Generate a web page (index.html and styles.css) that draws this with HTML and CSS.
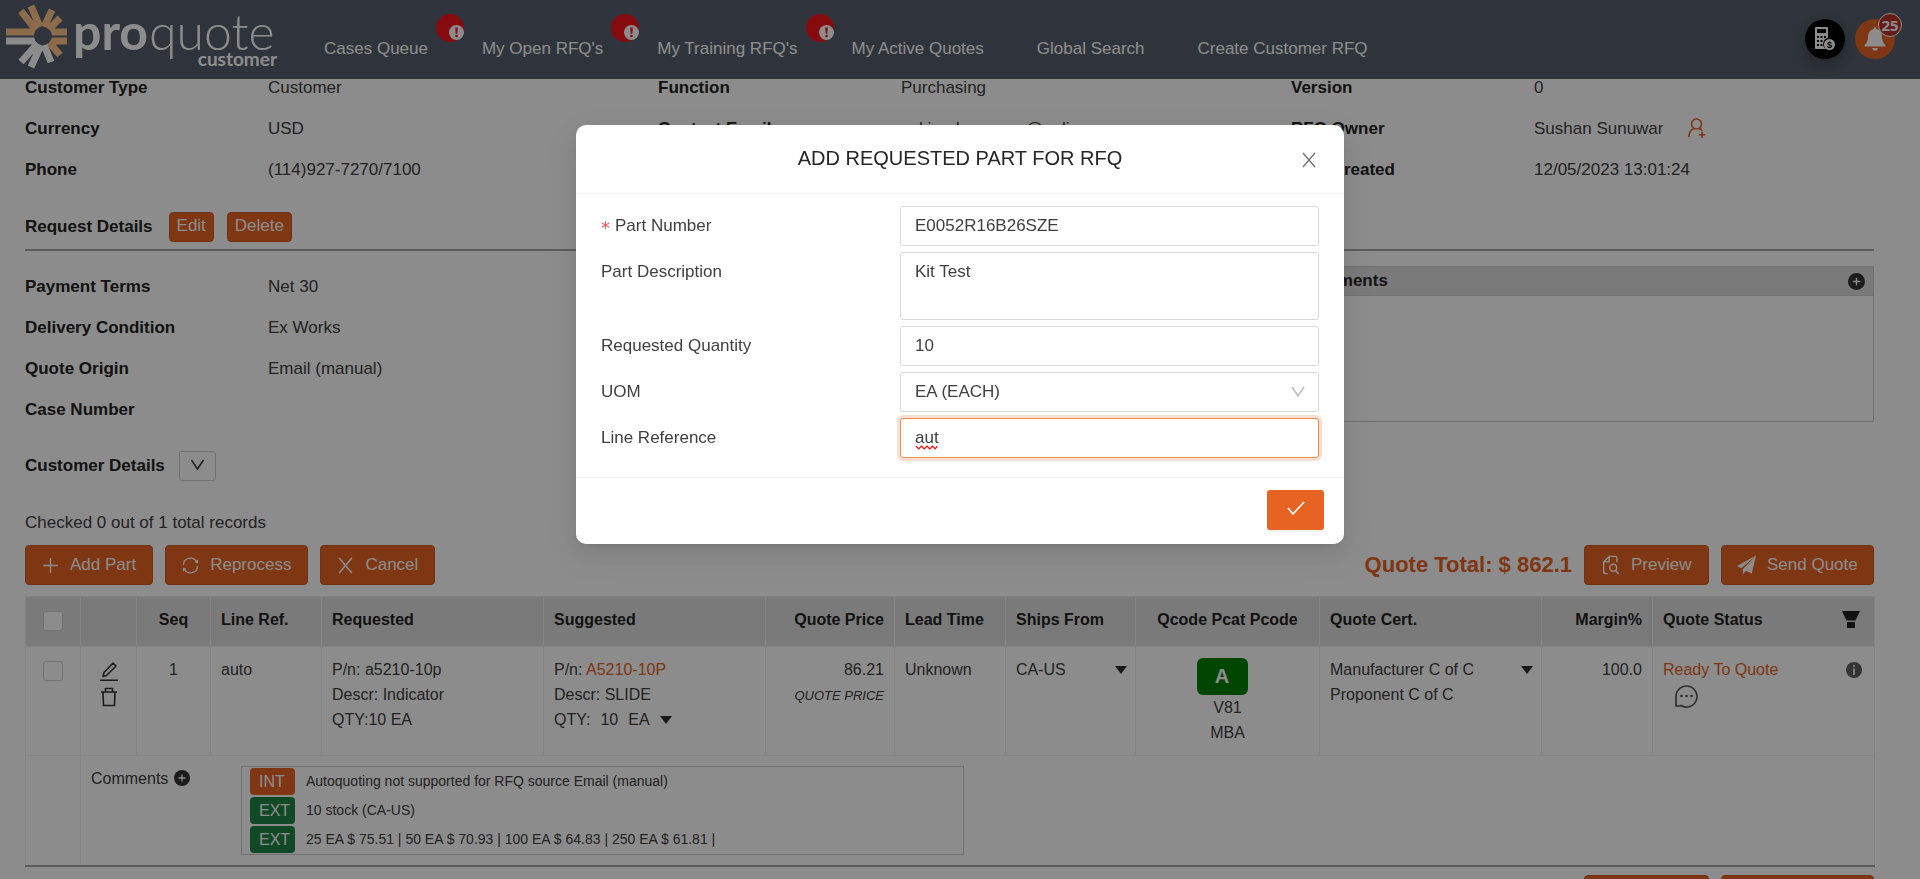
FILE: index.html
```html
<!DOCTYPE html>
<html lang="en">
<head>
<meta charset="utf-8">
<title>ProQuote Customer</title>
<link rel="stylesheet" href="styles.css">
</head>
<body>
<svg class="defs" aria-hidden="true">
  <symbol id="i-caret" viewBox="0 0 12 8"><path d="M0 0h12L6 8z" fill="currentColor"/></symbol>
  <symbol id="i-down" viewBox="0 0 14 12"><path d="M1 1l6 9 6-9" fill="none" stroke="currentColor" stroke-width="1.6"/></symbol>
  <symbol id="i-x" viewBox="0 0 16 16"><path d="M2 1l12 14M14 1L2 15" fill="none" stroke="currentColor" stroke-width="1.5"/></symbol>
  <symbol id="i-plus" viewBox="0 0 16 16"><path d="M8 1v14M1 8h14" fill="none" stroke="currentColor" stroke-width="1.3"/></symbol>
  <symbol id="i-pluscircle" viewBox="0 0 16 16"><circle cx="8" cy="8" r="8" fill="currentColor"/><path d="M8 4.500v7M4.500 8h7" stroke="#fff" stroke-width="1.300"/></symbol>
  <symbol id="i-sync" viewBox="0 0 18 18"><path d="M1.500 8.500a7.500 7.500 0 0 1 14-3.500M16.500 9.500a7.500 7.500 0 0 1-14 3.500" fill="none" stroke="currentColor" stroke-width="1.400"/><path d="M17 2.500v4.500l-4-1.500zM1 15.500V11l4 1.500z" fill="currentColor"/></symbol>
  <symbol id="i-alert" viewBox="0 0 15 15"><circle cx="7.5" cy="7.5" r="7.500" fill="#fff"/><path d="M6.200 2.500h2.600l-.5 6.200H6.700z" fill="#f5141d"/><circle cx="7.500" cy="11" r="1.300" fill="#f5141d"/></symbol>
  <symbol id="i-preview" viewBox="0 0 20 22"><path d="M7 20.500H4.500a2 2 0 0 1-2-2V7.500l6-6h7a1.500 1.500 0 0 1 1.500 1.500v5M8.500 2v5.500H3" fill="none" stroke="currentColor" stroke-width="1.600"/><circle cx="13" cy="14" r="3.800" fill="none" stroke="currentColor" stroke-width="1.600"/><path d="M15.500 17l3.500 4" stroke="currentColor" stroke-width="1.600"/></symbol>
  <symbol id="i-send" viewBox="0 0 18 18"><path d="M18 0L0 10l4 2zM18 0L5.500 13v5l3-3.500 5.500 2.500z" fill="currentColor"/></symbol>
</svg>

<header class="topbar">
  <svg class="logo" viewBox="0 0 280 72" role="img" aria-label="proquote customer">
    <g fill="none" stroke-width="7">
      <path stroke="#fdc48b" d="M6 32h29M21 11l15 19M31 6l9 21M52 10l-8 17M60 18L48 30M67 32H51M67 41H51M60 55L48 41"/>
      <path stroke="#fff" d="M6 41h29M21 62l17-19M31 67l10-22M51 62l-7-17"/>
    </g>
    <circle cx="43" cy="36" r="9" fill="#57606d"/>
    <text x="73" y="50" class="logo-pro">pro</text>
    <text x="149" y="50" class="logo-quote">quote</text>
    <text x="277" y="66" class="logo-sub">customer</text>
  </svg>
  <nav class="nav">
    <a href="#">Cases Queue</a><span class="alert"><svg><use href="#i-alert"/></svg></span>
    <a href="#">My Open RFQ's</a><span class="alert"><svg><use href="#i-alert"/></svg></span>
    <a href="#">My Training RFQ's</a><span class="alert"><svg><use href="#i-alert"/></svg></span>
    <a href="#">My Active Quotes</a>
    <a href="#" class="wide">Global Search</a>
    <a href="#" class="wide">Create Customer RFQ</a>
  </nav>
  <div class="tools">
    <button class="round black" aria-label="Calculator"><svg viewBox="0 0 22 24" width="22" height="24"><path fill-rule="evenodd" fill="#fff" d="M2 0h11q1 0 1 1v10a6 6 0 0 0-2 11H2q-1 0-1-1V1q0-1 1-1zM3 2v4h9V2zM3 9v2h2V9zM6.500 9v2h2V9zM10 9v2h2V9zM3 13v2h2v-2zM6.500 13v2h2v-2zM3 17v2h2v-2zM6.500 17v2h2v-2z"/><circle cx="15.500" cy="17.500" r="5.500" fill="#fff"/><text x="15.500" y="21" class="dollar">$</text></svg></button>
    <button class="round orange" aria-label="Notifications"><svg viewBox="0 0 22 24" width="22" height="24"><path fill="#fff" d="M11 0q1 0 1.300 2C17 3 18 6 18 10q0 5 3.500 8v1.500H.5V18Q4 15 4 10q0-7 5.700-8Q10 0 11 0zM8 21h6q-1 3-3 3t-3-3z"/></svg><span class="count">25</span></button>
  </div>
</header>

<main class="page">
  <dl class="info">
    <div><dt>Customer Type</dt><dd>Customer</dd></div>
    <div><dt>Function</dt><dd>Purchasing</dd></div>
    <div><dt>Version</dt><dd>0</dd></div>
    <div><dt>Currency</dt><dd>USD</dd></div>
    <div><dt>Contact Email</dt><dd>askingdemouser@online.com</dd></div>
    <div><dt>RFQ Owner</dt><dd>Sushan Sunuwar <svg class="user" viewBox="0 0 18 20"><path d="M1 19q0-7 5-8.500M11 10.500q2 .5 3 2" fill="none" stroke="currentColor" stroke-width="1.600"/><circle cx="8.500" cy="6" r="5" fill="none" stroke="currentColor" stroke-width="1.600"/><path d="M14 13.500v6.500M10.800 16.800h6.400" stroke="currentColor" stroke-width="1.600"/></svg></dd></div>
    <div><dt>Phone</dt><dd>(114)927-7270/7100</dd></div>
    <div></div>
    <div><dt>RFQ Created</dt><dd>12/05/2023 13:01:24</dd></div>
  </dl>
  <div class="section-head"><h2>Request Details</h2><button class="mini">Edit</button><button class="mini">Delete</button></div>
  <div class="details">
    <dl class="terms">
      <div><dt>Payment Terms</dt><dd>Net 30</dd></div>
      <div><dt>Delivery Condition</dt><dd>Ex Works</dd></div>
      <div><dt>Quote Origin</dt><dd>Email (manual)</dd></div>
      <div><dt>Case Number</dt><dd></dd></div>
    </dl>
    <section class="notes"><h3>Comments<svg class="plus"><use href="#i-pluscircle"/></svg></h3><div class="notes-body"></div></section>
  </div>
  <div class="customer"><h2>Customer Details</h2><button class="toggle" aria-label="Expand"><svg width="15" height="12"><use href="#i-down"/></svg></button></div>
  <p class="checked">Checked 0 out of 1 total records</p>
  <div class="actions">
    <button class="btn"><svg><use href="#i-plus"/></svg>Add Part</button>
    <button class="btn"><svg><use href="#i-sync"/></svg>Reprocess</button>
    <button class="btn"><svg><use href="#i-x"/></svg>Cancel</button>
    <strong class="total">Quote Total: $ 862.1</strong>
    <button class="btn tight preview"><svg><use href="#i-preview"/></svg>Preview</button>
    <button class="btn tight send"><svg><use href="#i-send"/></svg>Send Quote</button>
  </div>
  <table class="parts">
    <colgroup><col class="c1"><col class="c2"><col class="c3"><col class="c4"><col class="c5"><col class="c5"><col class="c7"><col class="c4"><col class="c9"><col class="c10"><col class="c5"><col class="c4"><col class="c5"></colgroup>
    <thead><tr>
      <th class="mid"><input type="checkbox" aria-label="Select all"></th><th></th><th class="mid">Seq</th><th>Line Ref.</th><th>Requested</th><th>Suggested</th><th class="end">Quote Price</th><th>Lead Time</th><th>Ships From</th><th class="mid">Qcode Pcat Pcode</th><th>Quote Cert.</th><th class="end">Margin%</th>
      <th><div class="split">Quote Status<svg class="funnel" viewBox="0 0 18 17"><path d="M0 0h18l-4.500 9.500h-9zM5 11h8v6H5z" fill="currentColor"/></svg></div></th>
    </tr></thead>
    <tbody>
      <tr class="part">
        <td class="mid"><input type="checkbox" aria-label="Select row 1"></td>
        <td class="mid icons"><svg viewBox="0 0 18 20" width="18" height="20"><path d="M0 18.200h18M3 14.500l1-4L13 1l3 3-9.500 9.500z" fill="none" stroke="currentColor" stroke-width="1.600" stroke-linejoin="round"/></svg><svg viewBox="0 0 18 20" width="18" height="20"><path d="M1 5h16M3 5l.5 13.500h11L15 5M5.500 5V1.500h7V5" fill="none" stroke="currentColor" stroke-width="1.600"/></svg></td>
        <td class="mid">1</td><td>auto</td>
        <td>P/n: a5210-10p<br>Descr: Indicator<br>QTY:10 EA</td>
        <td>P/n: <a href="#">A5210-10P</a><br>Descr: SLIDE<br><span class="qty"><span>QTY:</span><span>10</span><span>EA</span><svg class="caret"><use href="#i-caret"/></svg></span></td>
        <td class="end">86.21<br><em>QUOTE PRICE</em></td><td>Unknown</td>
        <td><div class="split">CA-US<svg class="caret"><use href="#i-caret"/></svg></div></td>
        <td class="mid code"><span class="grade">A</span>V81<br>MBA</td>
        <td><div class="split">Manufacturer C of C<svg class="caret"><use href="#i-caret"/></svg></div>Proponent C of C</td>
        <td class="end">100.0</td>
        <td><div class="split"><a href="#">Ready To Quote</a><svg class="inform" viewBox="0 0 16 16"><circle cx="8" cy="8" r="8" fill="currentColor"/><path d="M8 3v2M8 6.500V13" stroke="#fff" stroke-width="1.600"/></svg></div><svg class="chat" viewBox="0 0 24 24"><path d="M2 22V12a10.500 10.500 0 1 1 5 9.500L6 22z" fill="none" stroke="currentColor" stroke-width="1.600"/><g fill="currentColor"><circle cx="7.500" cy="12" r="1.300"/><circle cx="12.500" cy="12" r="1.300"/><circle cx="17.500" cy="12" r="1.300"/></g></svg></td>
      </tr>
      <tr class="remarks">
        <td></td>
        <td colspan="12"><div class="remark-row"><span class="remark-label">Comments<svg class="plus"><use href="#i-pluscircle"/></svg></span>
          <ul><li><span class="tag int">INT</span>Autoquoting not supported for RFQ source Email (manual)</li><li><span class="tag">EXT</span>10 stock (CA-US)</li><li><span class="tag">EXT</span>25 EA $ 75.51 | 50 EA $ 70.93 | 100 EA $ 64.83 | 250 EA $ 61.81 |</li></ul></div></td>
      </tr>
    </tbody>
  </table>
  <div class="actions bottom">
    <button class="btn tight preview" aria-label="Preview"><svg><use href="#i-preview"/></svg></button>
    <button class="btn tight send" aria-label="Send Quote"><svg><use href="#i-send"/></svg></button>
  </div>
</main>

<div class="mask">
  <form class="modal" role="dialog" aria-labelledby="title">
    <div class="modal-head"><h1 id="title">ADD REQUESTED PART FOR RFQ</h1><button type="button" class="close" aria-label="Close"><svg width="16" height="16"><use href="#i-x"/></svg></button></div>
    <div class="modal-body">
      <label for="pn"><span class="req">*</span>Part Number</label><input id="pn" value="E0052R16B26SZE">
      <label for="pd">Part Description</label><textarea id="pd">Kit Test</textarea>
      <label for="rq">Requested Quantity</label><input id="rq" value="10">
      <label for="uom">UOM</label><div class="select"><select id="uom"><option>EA (EACH)</option></select><svg><use href="#i-down"/></svg></div>
      <label for="lr">Line Reference</label><div class="spell"><input id="lr" class="active" value="aut"><svg viewBox="0 0 26 5"><path d="M1 1l3 3 3-3 3 3 3-3 3 3 3-3 3 3 2-3" fill="none" stroke="#f00" stroke-width="1.300"/></svg></div>
    </div>
    <div class="modal-foot"><button type="button" class="ok" aria-label="Confirm"><svg viewBox="0 0 18 14" width="18" height="14"><path d="M1 7l5 6L17 1" fill="none" stroke="#fff" stroke-width="1.600"/></svg></button></div>
  </form>
</div>
</body>
</html>
```
FILE: styles.css
```css
* { box-sizing: border-box; }
html, body { height: 100%; }
body { margin: 0; overflow: hidden; font: 17px/24px "Liberation Sans", Arial, sans-serif; color: #404040; background: #fff; }
button, input, textarea, select { font: inherit; color: inherit; margin: 0; }
button { cursor: pointer; }
h1, h2, h3, p, dl, dd, ul { margin: 0; padding: 0; }
a { color: #e66324; text-decoration: none; }
.defs { position: absolute; width: 0; height: 0; }

.topbar { display: flex; align-items: flex-start; height: 79px; background: #57606d; }
.logo { width: 280px; height: 72px; flex: none; }
.logo text { fill: #fff; font-family: Lato, "Liberation Sans", sans-serif; }
.logo-pro { font-size: 50px; font-weight: 700; }
.logo-quote { font-size: 50px; font-weight: 300; }
.logo-sub { font-size: 19px; font-weight: 700; text-anchor: end; }
.nav { display: flex; align-items: flex-start; padding-left: 44px; }
.nav a { color: #fff; margin-top: 37px; white-space: nowrap; }
.nav .wide { margin-left: 53px; }
.alert { width: 28px; height: 28px; margin: 14px 18px 0 8px; border-radius: 50%; background: #f5141d; display: flex; align-items: flex-end; justify-content: flex-end; padding: 0 0 2px; }
.alert svg { width: 15px; height: 15px; }
.tools { display: flex; gap: 10px; margin: 19px 25px 0 auto; }
.round { position: relative; width: 40px; height: 40px; border: 0; border-radius: 50%; padding: 0; display: flex; align-items: center; justify-content: center; }
.black { background: #000; box-shadow: 0 6px 16px rgba(0,0,0,.3); }
.orange { background: #e66324; }
.dollar { font: 700 9px "Liberation Sans", Arial, sans-serif; text-anchor: middle; fill: #000; }
.count { position: absolute; right: -7px; top: -6px; width: 24px; height: 24px; border: 1px solid #fff; border-radius: 50%; background: #b8342c; color: #fff; font: 700 15px/22px "Open Sans", sans-serif; text-align: center; }

.page { padding: 0 46px 0 25px; }
dt, h2, h3 { font-size: 17px; line-height: 24px; font-weight: 700; color: #222; }
.info { display: grid; grid-template-columns: 633fr 633fr 583fr; row-gap: 17px; margin-top: -3px; }
.info > div, .terms > div { display: flex; }
dt { width: 243px; flex: none; }
.user { width: 18px; height: 20px; margin-left: 20px; vertical-align: -4px; color: #e66324; }
.section-head { display: flex; align-items: center; gap: 13px; height: 52px; margin-top: 17px; padding: 11px 0 6px; border-bottom: 2px solid #a8a8a8; }
.section-head h2 { margin-right: 3px; }
.mini { height: 30px; padding: 0 7px 1px; border: 1px solid #d05a20; border-radius: 4px; background: #e66324; color: #fff; }
.details { display: grid; grid-template-columns: 1266fr 583fr; padding-top: 15px; }
.terms { display: grid; row-gap: 17px; padding-top: 9px; align-content: start; }
.notes { border: 1px solid #ccc; height: 156px; }
.notes h3 { display: flex; justify-content: space-between; align-items: center; height: 29px; padding: 0 8px; background: #dedede; border-bottom: 1px solid #ccc; }
.plus { width: 17px; height: 17px; color: #333; }
.customer { display: flex; align-items: center; margin-top: 29px; gap: 14px; }
.toggle { width: 37px; height: 30px; border: 1px solid #d0d0d0; border-radius: 3px; background: #fff; padding: 0; }
.checked { margin-top: 30px; }
.actions { display: flex; align-items: center; gap: 12px; margin-top: 10px; }
.btn { display: flex; align-items: center; gap: 11px; height: 40px; padding: 0 16px; border: 1px solid #d05a20; border-radius: 4px; background: #e66324; color: #fff; white-space: nowrap; }
.btn svg { width: 17px; height: 17px; }
.tight svg { width: 19px; height: 20px; }
.preview { min-width: 125px; }
.send { min-width: 153px; padding: 0 15px; }
.total { margin-left: auto; font-size: 22px; color: #e66324; }
.bottom { justify-content: flex-end; margin-top: 8px; }

.parts { width: 100%; margin-top: 11px; table-layout: fixed; border-collapse: collapse; font-size: 16px; line-height: 25px; border-bottom: 2px solid #a8a8a8; }
.c1 { width: 55px; } .c2 { width: 56px; } .c3 { width: 74px; } .c4 { width: 111px; } .c5 { width: 222px; } .c7 { width: 129px; } .c9 { width: 130px; } .c10 { width: 184px; }
.parts th, .parts td { border: 1px solid #f0f0f0; padding: 10px; text-align: left; vertical-align: top; }
.parts th { height: 50px; background: #dedede; color: #1f1f1f; }
.parts .mid { text-align: center; }
.parts .end { text-align: right; }
.parts input { appearance: none; width: 20px; height: 20px; border: 1px solid #d0d0d0; border-radius: 3px; background: #fff; vertical-align: middle; }
.part { height: 109px; }
.split { display: flex; align-items: center; justify-content: space-between; white-space: nowrap; }
.funnel { width: 18px; height: 17px; margin-right: 4px; }
.caret { width: 12px; height: 8px; color: #303030; }
.split .caret { margin-right: -2px; }
.icons svg { display: block; margin: 5px auto 0; color: #333; }
.qty { display: flex; align-items: center; gap: 10px; }
.parts em { font-size: 13px; }
.parts .code { padding-top: 11px; }
.grade { display: block; width: 51px; height: 37px; margin: 0 0 0 calc(50% - 31px); border-radius: 6px; background: #008000; color: #fff; font: 700 20px/36px "Liberation Sans", Arial, sans-serif; }
.inform { width: 16px; height: 16px; margin-right: 2px; color: #606060; }
.chat { display: block; width: 24px; height: 24px; margin: 2px 0 0 11px; color: #555; }
.remarks { height: 110px; }
.remark-row { display: flex; }
.remark-label { width: 150px; }
.remark-label .plus { width: 16px; height: 16px; margin-left: 6px; vertical-align: -2px; }
.remarks ul { width: 723px; list-style: none; border: 1px solid #ccc; padding: 1px 8px; font-size: 14px; }
.remarks li { display: flex; align-items: center; gap: 11px; margin-bottom: 2px; }
.remarks li:last-child { margin-bottom: 0; }
.tag { width: 45px; height: 27px; border-radius: 4px; background: #208548; color: #fff; font-size: 16px; line-height: 27px; padding-left: 9px; }
.int { background: #e66324; }

.mask { position: fixed; inset: 0; background: rgba(0,0,0,.45); padding-top: 125px; }
.modal { width: 40%; margin: 0 auto; background: #fff; border-radius: 10px; box-shadow: 0 4px 8px -5px rgba(0,0,0,.12), 0 8px 20px rgba(0,0,0,.08), 0 11px 35px 10px rgba(0,0,0,.05); }
.modal-head { position: relative; height: 69px; padding-top: 20px; border-bottom: 1px solid #f0f0f0; text-align: center; }
.modal h1 { font-size: 20px; line-height: 26px; font-weight: 400; color: #262626; }
.close { position: absolute; right: 20px; top: 20px; width: 30px; height: 30px; border: 0; background: none; color: #777; padding: 0; display: grid; place-items: center; }
.modal-body { display: grid; grid-template-columns: 299fr 419fr; row-gap: 6px; padding: 12px 25px 19px; color: #404040; }
.modal-body label { line-height: 40px; }
.req { display: inline-block; height: 20px; color: #ff4d4f; margin-right: 5px; font: 18px/30px "DejaVu Sans", sans-serif; vertical-align: top; padding-top: 7px; }
.modal-body input, .modal-body textarea, .modal-body select { display: block; width: 100%; height: 40px; border: 1px solid #d9d9d9; border-radius: 3px; background: #fff; padding: 0 14px; outline: 0; }
.modal-body textarea { height: 68px; padding-top: 7px; resize: none; }
.modal-body select { appearance: none; }
.modal-body .active { border-color: #f08c50; box-shadow: 0 0 0 3px rgba(230,99,36,.2); }
.select, .spell { position: relative; }
.select svg { position: absolute; right: 14px; top: 14px; width: 14px; height: 12px; color: #bfbfbf; }
.spell svg { position: absolute; left: 15px; top: 27px; width: 24px; height: 5px; }
.modal-foot { display: flex; justify-content: flex-end; padding: 12px 20px 14px; border-top: 1px solid #f0f0f0; }
.ok { width: 57px; height: 40px; border: 0; border-radius: 3px; background: #e66324; box-shadow: 0 2px 0 rgba(0,0,0,.05); padding: 0; }
```
